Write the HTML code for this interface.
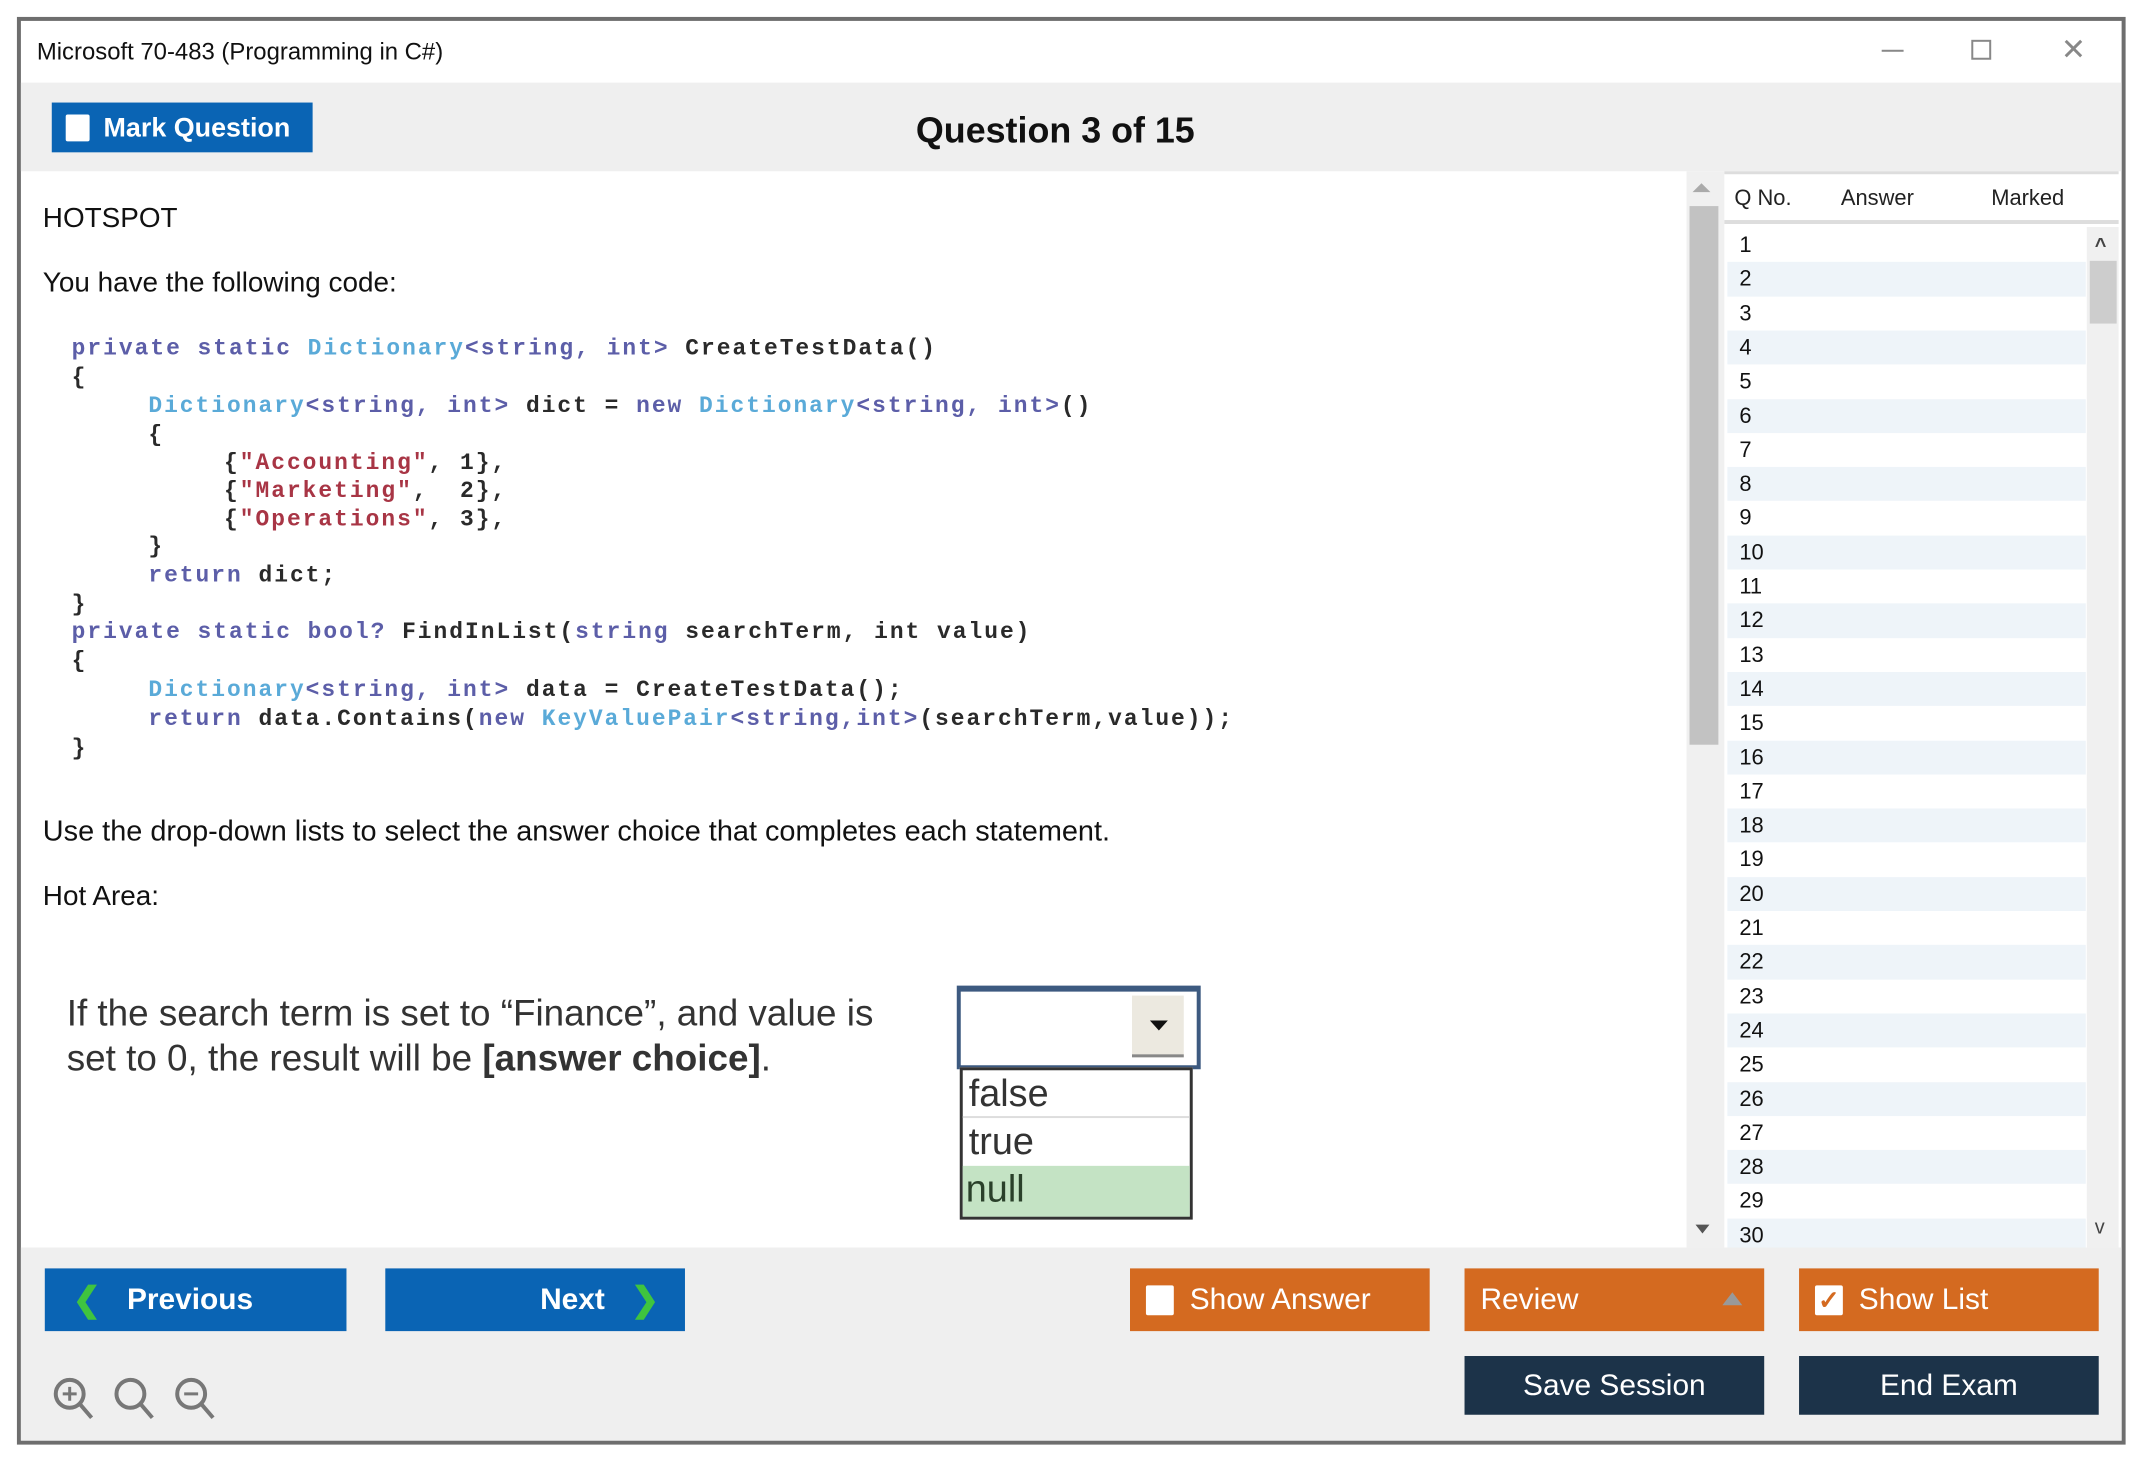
<!DOCTYPE html>
<html><head><meta charset="utf-8"><style>
*{margin:0;padding:0;box-sizing:border-box}
body{width:2150px;height:1470px;background:#fff;position:relative;font-family:"Liberation Sans",sans-serif;overflow:hidden}
#w{position:absolute;left:0;top:0;width:2150px;height:1470px;transform:scale(0.9956);transform-origin:0 0}
.a{position:absolute}
.win{left:17px;top:17px;width:2118px;height:1434px;border:4px solid #6e6e6e;background:#fff}
.code{position:absolute;font-family:"Liberation Mono",monospace;font-size:23px;font-weight:bold;letter-spacing:2.0px;color:#2a2a2a;white-space:pre;line-height:28px}
.k{color:#5c5ea8}.t{color:#5aaad8}.s{color:#a83545}
.btn{position:absolute;color:#fff;font-size:30px;display:flex;align-items:center}
.row{position:absolute;left:1735px;width:360px;height:34.3px;font-size:22px;color:#111;padding-left:12px;line-height:34px}
.row.e{background:#eef4f9}
</style></head><body><div id="w">
<div class="a win"></div>
<div class="a" style="left:37px;top:39px;font-size:24px;color:#111">Microsoft 70-483 (Programming in C#)</div>
<div class="a" style="left:1890px;top:50px;width:22px;height:2px;background:#888"></div>
<div class="a" style="left:1980px;top:40px;width:20px;height:20px;border:2px solid #888"></div>
<div class="a" style="left:2070px;top:36px;font-size:30px;color:#888;line-height:30px">✕</div>
<div class="a" style="left:21px;top:83px;width:2110px;height:89px;background:#efefef"></div>
<div class="btn" style="left:52px;top:103px;width:262px;height:50px;background:#0a64b4;font-weight:bold;font-size:27px"><span style="display:inline-block;width:24px;height:27px;background:#fff;margin:0 14px 0 14px;border-radius:2px"></span>Mark Question</div>
<div class="a" style="left:860px;top:110px;width:400px;text-align:center;font-size:36px;font-weight:bold;color:#111">Question 3 of 15</div>
<div class="a" style="left:1694px;top:172px;width:38px;height:1081px;background:#f0f0f0"></div>
<div class="a" style="left:1700px;top:184px;width:0;height:0;border-left:9px solid transparent;border-right:9px solid transparent;border-bottom:9px solid #aaa"></div>
<div class="a" style="left:1697px;top:207px;width:29px;height:541px;background:#c2c2c2"></div>
<div class="a" style="left:1703px;top:1230px;width:0;height:0;border-left:7px solid transparent;border-right:7px solid transparent;border-top:9px solid #555"></div>
<div class="a" style="left:43px;top:203px;font-size:28px;color:#111">HOTSPOT</div>
<div class="a" style="left:43px;top:268px;font-size:28px;color:#111">You have the following code:</div>
<div class="code" style="left:72px;top:336px"><span class="k">private static</span> <span class="t">Dictionary</span><span class="k">&lt;string,</span> <span class="k">int&gt;</span> CreateTestData()</div>
<div class="code" style="left:72px;top:365px">{</div>
<div class="code" style="left:149px;top:394px"><span class="t">Dictionary</span><span class="k">&lt;string,</span> <span class="k">int&gt;</span> dict = <span class="k">new</span> <span class="t">Dictionary</span><span class="k">&lt;string,</span> <span class="k">int&gt;</span>()</div>
<div class="code" style="left:149px;top:423px">{</div>
<div class="code" style="left:225px;top:451px">{<span class="s">"Accounting"</span>, 1},</div>
<div class="code" style="left:225px;top:479px">{<span class="s">"Marketing"</span>,  2},</div>
<div class="code" style="left:225px;top:508px">{<span class="s">"Operations"</span>, 3},</div>
<div class="code" style="left:149px;top:535px">}</div>
<div class="code" style="left:149px;top:564px"><span class="k">return</span> dict;</div>
<div class="code" style="left:72px;top:593px">}</div>
<div class="code" style="left:72px;top:621px"><span class="k">private static bool?</span> FindInList(<span class="k">string</span> searchTerm, int value)</div>
<div class="code" style="left:72px;top:650px">{</div>
<div class="code" style="left:149px;top:679px"><span class="t">Dictionary</span><span class="k">&lt;string,</span> <span class="k">int&gt;</span> data = CreateTestData();</div>
<div class="code" style="left:149px;top:708px"><span class="k">return</span> data.Contains(<span class="k">new</span> <span class="t">KeyValuePair</span><span class="k">&lt;string,int&gt;</span>(searchTerm,value));</div>
<div class="code" style="left:72px;top:738px">}</div>
<div class="a" style="left:43px;top:819px;font-size:29px;color:#111">Use the drop-down lists to select the answer choice that completes each statement.</div>
<div class="a" style="left:43px;top:884px;font-size:28px;color:#111">Hot Area:</div>
<div class="a" style="left:67px;top:995px;font-size:37px;color:#333;line-height:45px">If the search term is set to “Finance”, and value is<br>set to 0, the result will be <b>[answer choice]</b>.</div>
<div class="a" style="left:961px;top:990px;width:245px;height:84px;border:4px solid #3d5a80;border-top-width:6px;background:#fff"></div>
<div class="a" style="left:1137px;top:1000px;width:52px;height:62px;background:#ece9e0;border-bottom:3px solid #888"></div>
<div class="a" style="left:1155px;top:1025px;width:0;height:0;border-left:9px solid transparent;border-right:9px solid transparent;border-top:10px solid #111"></div>
<div class="a" style="left:964px;top:1072px;width:234px;height:153px;border:3px solid #333;background:#fff;font-size:38px;color:#333;line-height:48px">
<div style="height:48px;border-bottom:2px solid #ddd;padding-left:6px">false</div>
<div style="height:48px;padding-left:6px">true</div>
<div style="height:51px;background:#c4e3c4;padding-left:3px;color:#2a402a">null</div>
</div>
<div class="a" style="left:1732px;top:172px;width:396px;height:53px;border-top:3px solid #ddd;border-bottom:4px solid #ddd;background:#fff;font-size:22px;color:#222"></div>
<div class="a" style="left:1742px;top:186px;font-size:22px;color:#222">Q No.</div>
<div class="a" style="left:1849px;top:186px;font-size:22px;color:#222">Answer</div>
<div class="a" style="left:2000px;top:186px;font-size:22px;color:#222">Marked</div>
<div class="a" style="left:1732px;top:225px;width:396px;height:1028px;background:#fff"></div>
<div class="a" style="left:2096px;top:228px;width:32px;height:1025px;background:#f0f0f0"></div>
<div class="a" style="left:2099px;top:262px;width:27px;height:63px;background:#cdcdcd"></div>
<div class="a" style="left:2104px;top:236px;font-size:20px;color:#444;font-weight:bold">^</div>
<div class="a" style="left:2104px;top:1222px;font-size:20px;color:#444">v</div>
<div class="row" style="top:229px">1</div><div class="row e" style="top:263.3px">2</div><div class="row" style="top:297.6px">3</div><div class="row e" style="top:331.9px">4</div><div class="row" style="top:366.2px">5</div><div class="row e" style="top:400.5px">6</div><div class="row" style="top:434.8px">7</div><div class="row e" style="top:469.1px">8</div><div class="row" style="top:503.4px">9</div><div class="row e" style="top:537.7px">10</div><div class="row" style="top:572px">11</div><div class="row e" style="top:606.3px">12</div><div class="row" style="top:640.6px">13</div><div class="row e" style="top:674.9px">14</div><div class="row" style="top:709.2px">15</div><div class="row e" style="top:743.5px">16</div><div class="row" style="top:777.8px">17</div><div class="row e" style="top:812.1px">18</div><div class="row" style="top:846.4px">19</div><div class="row e" style="top:880.7px">20</div><div class="row" style="top:915px">21</div><div class="row e" style="top:949.3px">22</div><div class="row" style="top:983.6px">23</div><div class="row e" style="top:1017.9px">24</div><div class="row" style="top:1052.2px">25</div><div class="row e" style="top:1086.5px">26</div><div class="row" style="top:1120.8px">27</div><div class="row e" style="top:1155.1px">28</div><div class="row" style="top:1189.4px">29</div><div class="row e" style="top:1223.7px;height:29px">30</div>
<div class="a" style="left:21px;top:1253px;width:2110px;height:194px;background:#efefef"></div>
<div class="btn" style="left:45px;top:1274px;width:303px;height:63px;background:#0a64b4;font-weight:bold"><span style="color:#3fc43f;margin:0 26px 0 28px;font-size:34px">❮</span>Previous</div>
<div class="btn" style="left:387px;top:1274px;width:301px;height:63px;background:#0a64b4;font-weight:bold;justify-content:flex-end"><span>Next</span><span style="color:#3fc43f;margin:0 26px 0 26px;font-size:34px">❯</span></div>
<div class="btn" style="left:1135px;top:1274px;width:301px;height:63px;background:#d46a20"><span style="display:inline-block;width:28px;height:30px;background:#fff;margin:0 16px 0 16px;border-radius:2px"></span>Show Answer</div>
<div class="btn" style="left:1471px;top:1274px;width:301px;height:63px;background:#d46a20;padding-left:16px">Review<span style="position:absolute;right:22px;top:24px;border-left:10px solid transparent;border-right:10px solid transparent;border-bottom:13px solid #999"></span></div>
<div class="btn" style="left:1807px;top:1274px;width:301px;height:63px;background:#d46a20"><span style="display:inline-block;width:28px;height:30px;background:#fff;margin:0 16px 0 16px;border-radius:2px;color:#d46a20;font-size:26px;line-height:30px;text-align:center;font-weight:bold">✓</span>Show List</div>
<div class="btn" style="left:1471px;top:1362px;width:301px;height:59px;background:#1c3349;justify-content:center">Save Session</div>
<div class="btn" style="left:1807px;top:1362px;width:301px;height:59px;background:#1c3349;justify-content:center">End Exam</div>
<svg class="a" style="left:50px;top:1380px" width="180" height="50" viewBox="0 0 180 50" fill="none" stroke="#777" stroke-width="4">
<circle cx="20" cy="20" r="14"/><path d="M30 30 L42 44"/><path d="M13 20h14M20 13v14" stroke-width="3"/>
<circle cx="81" cy="20" r="14"/><path d="M91 30 L103 44"/>
<circle cx="142" cy="20" r="14"/><path d="M152 30 L164 44"/><path d="M135 20h14" stroke-width="3"/>
</svg>
</div></body></html>
